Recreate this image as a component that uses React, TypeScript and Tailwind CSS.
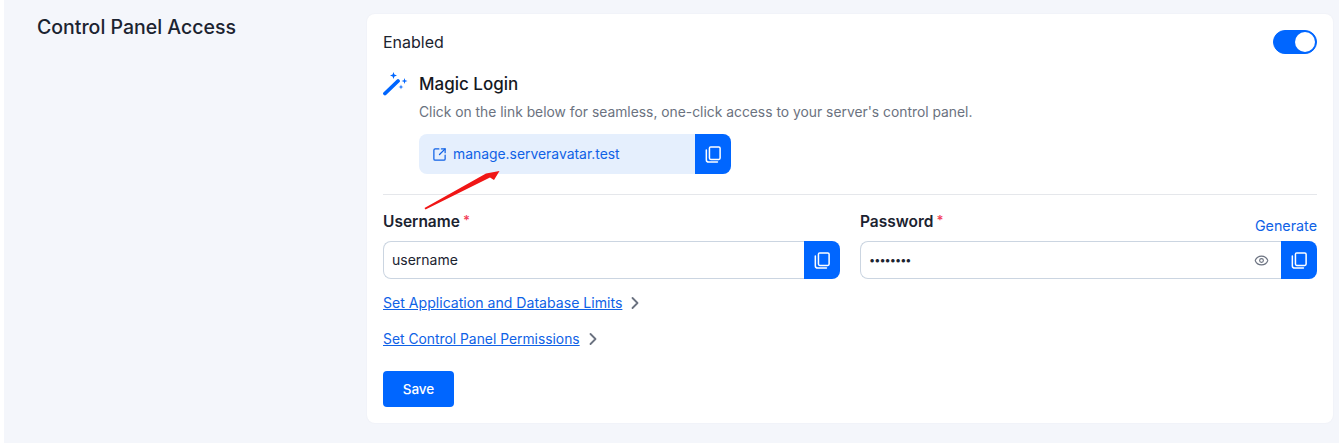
import { ChevronRight, Eye, SquareArrowOutUpRight } from "lucide-react";

function CopyButton({ className }: { className: string }) {
  return (
    <button className={`flex shrink-0 items-center justify-center bg-[#0066ff] text-white ${className}`}>
      <CopyIcon />
    </button>
  );
}

function CopyIcon() {
  return (
    <svg width="16" height="17" viewBox="0 0 18 19" fill="none" stroke="currentColor" strokeWidth="1.7">
      <rect x="5" y="1" width="12" height="14" rx="1.5" />
      <path d="M1.5 4.5v10.8c0 1.6 1.1 2.7 2.7 2.7h9.8" strokeLinecap="round" />
    </svg>
  );
}

function WandIcon() {
  return (
    <svg width="25" height="25" viewBox="0 0 25 25" fill="#0066ff">
      <path d="M2 21.5 15 9" stroke="#0066ff" strokeWidth="3.8" strokeLinecap="round" />
      <path d="M10.5 0 11.4 2.6 14 3.5 11.4 4.4 10.5 7 9.6 4.4 7 3.5 9.6 2.6Z" />
      <path d="M21.5 6 22.2 8.3 24.5 9 22.2 9.7 21.5 12 20.8 9.7 18.5 9 20.8 8.3Z" />
      <path d="M18 12.5 18.6 14.4 20.5 15 18.6 15.6 18 17.5 17.4 15.6 15.5 15 17.4 14.4Z" />
    </svg>
  );
}

function Label({ text }: { text: string }) {
  return (
    <span className="text-[15.5px] leading-5 font-semibold text-[#1b2330]">
      {text}
      <span className="ml-[3px] align-[2px] text-[13px] text-[#f2415a]">*</span>
    </span>
  );
}

export default function App() {
  return (
    <div className="h-[443px] overflow-hidden bg-white pl-1 font-['Inter',sans-serif]">
      <div className="flex h-full items-start bg-[#f4f6fb] pt-[14px] pr-[6px] pl-[33px]">
        <h2 className="w-[330px] shrink-0 pt-[1px] text-[19.5px] leading-6 font-medium text-[#1b2330]">
          Control Panel Access
        </h2>

        <div className="relative h-[409px] flex-1 rounded-lg bg-white p-4 shadow-[0_0_2px_rgba(30,40,70,0.05)]">
          <div className="flex h-6 items-center justify-between">
            <span className="text-[16px] text-[#1b2330]">Enabled</span>
            <div className="flex h-6 w-11 items-center justify-end rounded-full border border-[#0066ff] bg-[#0066ff] p-[1px]">
              <span className="size-5 rounded-full bg-white" />
            </div>
          </div>

          <div className="mt-[16px] flex items-center gap-[11px]">
            <WandIcon />
            <h3 className="text-[17px] leading-[28px] font-medium text-[#15191f]">Magic Login</h3>
          </div>

          <div className="pl-9">
            <p className="mt-[4px] text-[13.85px] leading-5 text-[#6b7280]">
              Click on the link below for seamless, one-click access to your server's control panel.
            </p>
            <div className="mt-[12px] flex h-10 w-[312px] overflow-hidden rounded-lg bg-[#e5effd]">
              <a href="#" className="flex flex-1 items-center gap-[6px] pl-[13px] text-[13.9px] text-[#0f62e6]">
                <SquareArrowOutUpRight size={15} strokeWidth={2} />
                manage.serveravatar.test
              </a>
              <CopyButton className="w-9" />
            </div>
          </div>

          <div className="mt-[20px] border-t border-[#e5e7eb]" />

          <div className="mt-[16px] flex gap-5">
            <div className="flex-1">
              <div className="flex h-5 items-center">
                <Label text="Username" />
              </div>
              <div className="mt-[10px] flex h-[38px]">
                <div className="flex min-w-0 flex-1 items-center rounded-l-lg border border-r-0 border-[#cbd5e1] pb-[1px] pl-2 text-[14px] text-[#1b2330]">
                  username
                </div>
                <CopyButton className="w-9 rounded-r-lg" />
              </div>
            </div>
            <div className="flex-1">
              <div className="flex h-5 items-center justify-between">
                <Label text="Password" />
                <a href="#" className="translate-y-[5px] text-[14.3px] text-[#0f62e6]">
                  Generate
                </a>
              </div>
              <div className="mt-[10px] flex h-[38px]">
                <div className="flex min-w-0 flex-1 items-center justify-between rounded-l-lg border border-r-0 border-[#cbd5e1] pr-[12px] pl-2 text-[14px] text-[#1b2330]">
                  <span className="text-[11px] tracking-[-1px]">••••••••</span>
                  <Eye size={15} strokeWidth={1.8} className="text-[#6b7280]" />
                </div>
                <CopyButton className="w-9 rounded-r-lg" />
              </div>
            </div>
          </div>

          <div className="mt-[14px] flex flex-col gap-4">
            <div className="flex h-5 items-center gap-[3px]">
              <a href="#" className="text-[14.1px] leading-5 text-[#0f62e6] underline">
                Set Application and Database Limits
              </a>
              <ChevronRight size={20} strokeWidth={2.2} className="text-[#6b7280]" />
            </div>
            <div className="flex h-5 items-center gap-[3px]">
              <a href="#" className="text-[13.85px] leading-5 text-[#0f62e6] underline">
                Set Control Panel Permissions
              </a>
              <ChevronRight size={20} strokeWidth={2.2} className="text-[#6b7280]" />
            </div>
          </div>

          <button className="mt-[22px] h-9 w-[71px] rounded bg-[#0066ff] text-[13.5px] font-medium text-white">
            Save
          </button>

          {/* red annotation arrow over the link box */}
          <svg className="absolute top-[153px] left-[57px]" width="78" height="44" viewBox="0 0 78 44" fill="#f01616">
            <path d="M0.5 41 L62 6.5 75.5 4 70 13 66 10.5 1.5 42.5Z" />
          </svg>
        </div>
      </div>
    </div>
  );
}
